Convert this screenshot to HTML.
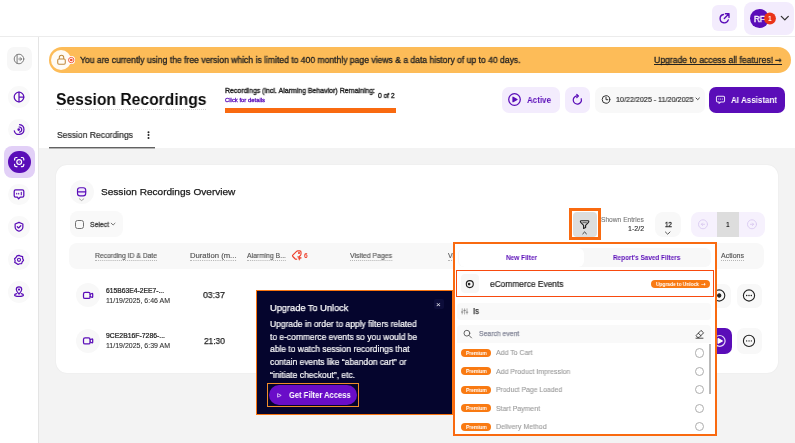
<!DOCTYPE html>
<html lang="en">
<head>
<meta charset="utf-8">
<title>Session Recordings</title>
<style>
*{box-sizing:border-box;margin:0;padding:0}
html,body{width:795px;height:443px;overflow:hidden;background:#fff}
body{font-family:"Liberation Sans",sans-serif;color:#111;position:relative;font-size:10px}
.a{position:absolute}
.t{position:absolute;white-space:nowrap;line-height:1;transform-origin:0 50%;will-change:transform}
svg.l{position:absolute;left:0;top:0;width:795px;height:443px;overflow:visible;pointer-events:none}
.p{fill:none;stroke:#5a0db8;stroke-width:1.25;stroke-linecap:round;stroke-linejoin:round}
.g{fill:none;stroke:#555;stroke-width:1;stroke-linecap:round;stroke-linejoin:round}
.w{fill:none;stroke:#fff;stroke-width:1.2;stroke-linecap:round;stroke-linejoin:round}
.sb{position:absolute;left:8.2px;width:21.6px;height:21.6px;border-radius:50%;background:#f9f9f9}
</style>
</head>
<body>
<!-- frame -->
<div class="a" style="left:0;top:36px;width:795px;height:1px;background:#ececec"></div>
<div class="a" style="left:38px;top:37px;width:1px;height:406px;background:#e4e4e4"></div>
<div class="a" style="left:39px;top:148px;width:756px;height:295px;background:#f3f3f3"></div>
<div class="a" style="left:48.5px;top:147px;width:106.5px;height:2px;background:linear-gradient(#626262 50%,#b4b4b4 50%)"></div>

<!-- top right -->
<div class="a" style="left:712.1px;top:5.3px;width:25.4px;height:25.9px;border-radius:6px;background:#f3ecfd"></div>
<div class="a" style="left:744.3px;top:2.3px;width:49.5px;height:32.7px;border-radius:8px;background:#f3ecfd"></div>
<div class="a" style="left:749.7px;top:8.9px;width:19px;height:19px;border-radius:50%;background:#5a0db8"></div>

<!-- sidebar -->
<div class="a" style="left:7.3px;top:46.7px;width:24.3px;height:24.7px;border-radius:7px;background:#f7f7f7"></div>
<div class="sb" style="top:86.2px"></div>
<div class="sb" style="top:118.7px"></div>
<div class="a" style="left:3.8px;top:146px;width:31.2px;height:32px;border-radius:8px;background:#e2d0f7"></div>
<div class="a" style="left:7.8px;top:150.7px;width:22.8px;height:22.8px;border-radius:50%;background:#5a0db8"></div>
<div class="sb" style="top:183.6px"></div>
<div class="sb" style="top:216px"></div>
<div class="sb" style="top:248.9px"></div>
<div class="sb" style="top:281.2px"></div>

<!-- banner -->
<div class="a" style="left:48.7px;top:47.1px;width:742.3px;height:25.8px;border-radius:13px;background:#fdbc58"></div>
<div class="a" style="left:51.1px;top:49.9px;width:20.3px;height:20.3px;border-radius:50%;background:#fffbf4"></div>
<div class="a" style="left:67.5px;top:56.3px;width:7.5px;height:7.5px;border-radius:50%;background:#fff"></div>

<div class="a" style="left:653.8px;top:63.6px;width:128px;height:1px;background:#222"></div>
<!-- title block -->
<div class="a" style="left:55.6px;top:108.6px;width:150.5px;height:0;border-top:1px dotted #d4d4d4"></div>
<div class="a" style="left:224.5px;top:108.4px;width:171.2px;height:4.5px;background:#f96a10"></div>

<!-- header buttons -->
<div class="a" style="left:501.8px;top:87px;width:58.2px;height:25.8px;border-radius:7px;background:#f3ecfd"></div>
<div class="a" style="left:564.8px;top:87px;width:25.2px;height:25.8px;border-radius:7px;background:#f3ecfd"></div>
<div class="a" style="left:594.6px;top:87px;width:110.4px;height:25.8px;border-radius:7px;background:#f8f8f8"></div>
<div class="a" style="left:709px;top:87px;width:76.2px;height:25.8px;border-radius:7px;background:#5a0db8"></div>

<!-- card -->
<div class="a" style="left:55.6px;top:165.4px;width:722.7px;height:207.7px;border-radius:11px;background:#fff;box-shadow:0 0 1.5px rgba(0,0,0,.08)"></div>
<div class="a" style="left:69.5px;top:180.4px;width:24px;height:24px;border-radius:50%;background:#f8f8f8"></div>
<div class="a" style="left:69.6px;top:211.3px;width:53.8px;height:25.9px;border-radius:8px;background:#f9f9f9"></div>
<div class="a" style="left:75.1px;top:220.4px;width:8.6px;height:8.6px;border-radius:2.6px;border:1.2px solid #727272"></div>
<div class="a" style="left:68.9px;top:243px;width:695.5px;height:26px;border-radius:8px;background:#f8f8f8"></div>
<!-- toolbar right -->
<div class="a" style="left:654.6px;top:212.2px;width:26.3px;height:25.2px;border-radius:8px;background:#f8f8f8"></div>
<div class="a" style="left:690.8px;top:211.6px;width:74px;height:25.8px;border-radius:8px;background:#f6f1fd"></div>
<div class="a" style="left:716.8px;top:211.6px;width:22.1px;height:25.8px;background:#dddddd"></div>
<!-- rows -->
<div class="a" style="left:76.2px;top:283.4px;width:24px;height:24px;border-radius:50%;background:#f8f8f8"></div>
<div class="a" style="left:76.2px;top:328.9px;width:24px;height:24px;border-radius:50%;background:#f8f8f8"></div>
<div class="a" style="left:705px;top:283.5px;width:25.5px;height:24px;border-radius:7px;background:#f8f8f8"></div>
<div class="a" style="left:736.5px;top:283.5px;width:25.5px;height:24px;border-radius:7px;background:#f8f8f8"></div>
<div class="a" style="left:705px;top:328.2px;width:26.7px;height:25.4px;border-radius:7px;background:#5a0db8"></div>
<div class="a" style="left:736.5px;top:328.2px;width:25.5px;height:25.4px;border-radius:7px;background:#f8f8f8"></div>

<svg class="l" viewBox="0 0 795 443">
<!-- share icon -->
<g transform="translate(724.7,18.3)" class="p" style="stroke-width:1.35">
<path d="M-1.2,-3.8 A4.2,4.2 0 1 0 3.6,1.6"/>
<path d="M-0.4,0.2 L4,-4.2 M0.7,-4.5 H4.3 V-0.9"/>
</g>
<!-- avatar badge & chevron -->
<circle cx="769.9" cy="18.6" r="6" fill="#ea3418"/>
<path d="M781.3,16.4 L784.8,19.9 L788.3,16.4" fill="none" stroke="#333" stroke-width="1.3" stroke-linecap="round" stroke-linejoin="round"/>
<!-- sidebar: expand -->
<g transform="translate(19,59)" class="g" style="stroke:#777;stroke-width:.95">
<circle r="4.8"/><path d="M-1.9,-4.3 V4.3"/><path d="M-0.2,0 H2.6 M1.3,-1.4 L2.7,0 L1.3,1.4"/>
</g>
<!-- sidebar 2 -->
<g transform="translate(19,97)" class="p"><circle r="4.8"/><path d="M0,-4.8 V4.8 M0,0 H4.8"/></g>
<!-- sidebar 3 spiral -->
<g transform="translate(19,129.6)" class="p">
<path d="M0.6,-4.9 A4.9,4.9 0 1 1 -4.7,1.2"/>
<path d="M0.2,-2.6 A2.6,2.6 0 0 1 0.6,2.55"/>
<circle r="0.7" cx="-0.3" cy="0" fill="#5a0db8"/>
</g>
<!-- sidebar 4 active -->
<g transform="translate(19.2,162.1)" class="w">
<path d="M-4.6,-2.2 V-3 A1.6,1.6 0 0 1 -3,-4.6 H-2.2 M2.2,-4.6 H3 A1.6,1.6 0 0 1 4.6,-3 V-2.2 M4.6,2.2 V3 A1.6,1.6 0 0 1 3,4.6 H2.2 M-2.2,4.6 H-3 A1.6,1.6 0 0 1 -4.6,3 V2.2"/>
<circle r="2.4"/><circle r="0.5" fill="#fff" stroke="none"/>
</g>
<!-- sidebar 5 chat -->
<g transform="translate(19,194.2)" class="p">
<path d="M-3.4,-4.4 H3.4 A1.4,1.4 0 0 1 4.8,-3 V1.6 A1.4,1.4 0 0 1 3.4,3 H1.2 L-0.4,4.6 L-1.6,3 H-3.4 A1.4,1.4 0 0 1 -4.8,1.6 V-3 A1.4,1.4 0 0 1 -3.4,-4.4 Z"/>
<path d="M-2.3,-0.9 V-0.3 M-0.3,-0.9 V-0.3 M2.3,-2 V0.6" style="stroke-width:1.1"/>
</g>
<!-- sidebar 6 shield -->
<g transform="translate(19,226.8) scale(.9)" class="p" style="stroke-width:1.35">
<path d="M0,-4.9 L4.3,-3.1 V0.2 C4.3,2.6 2.4,4.1 0,5 C-2.4,4.1 -4.3,2.6 -4.3,0.2 V-3.1 Z"/>
<path d="M-1.9,-0.1 L-0.5,1.3 L2,-1.2"/>
</g>
<!-- sidebar 7 gear -->
<g transform="translate(19,259.8) scale(.9)" class="p">
<path d="M0,-5 L1.9,-4 L4,-3.5 L4.1,-1.3 L5,0.6 L3.6,2.3 L2.9,4.3 L0.8,4.4 L-1,5.2 L-2.7,4 L-4.7,3 L-4.3,0.9 L-4.9,-1.1 L-3.3,-2.5 L-2.2,-4.4 Z" style="stroke-width:1.35"/>
<circle r="1.7"/>
</g>
<!-- sidebar 8 pin -->
<g transform="translate(19,291.8) scale(.9)" class="p" style="stroke-width:1.35">
<path d="M0,2.6 C-1.6,0.6 -3,-0.8 -3,-2.5 A3,3 0 0 1 3,-2.5 C3,-0.8 1.6,0.6 0,2.6 Z"/>
<circle cy="-2.5" r="0.6"/>
<path d="M-2.6,2 C-4.3,2.4 -4.9,3 -4.9,3.6 C-4.9,4.6 -2.6,5.2 0,5.2 C2.6,5.2 4.9,4.6 4.9,3.6 C4.9,3 4.3,2.4 2.6,2"/>
</g>
<!-- banner lock -->
<g transform="translate(61.5,60.2) scale(.92)" fill="none" stroke="#c08b3f" stroke-width="1.15" stroke-linejoin="round">
<rect x="-4.1" y="-1.3" width="8.2" height="5.6" rx="1.3"/>
<path d="M-2.4,-1.3 V-2.9 A2.4,2.4 0 0 1 2.4,-2.9 V-1.3"/>
</g>
<circle cx="71.25" cy="60.05" r="2.7" fill="none" stroke="#f0502c" stroke-width="0.9"/>
<circle cx="71.25" cy="60.05" r="1.3" fill="#f0502c"/>
<!-- tab kebab -->
<g fill="#222"><circle cx="148.5" cy="132.3" r="1"/><circle cx="148.5" cy="135.1" r="1"/><circle cx="148.5" cy="137.9" r="1"/></g>
<!-- active play -->
<g transform="translate(514.5,99.5)" class="p"><circle r="5.8"/><path d="M-1.5,-2.3 L2.5,0 L-1.5,2.3 Z" fill="#5a0db8"/></g>
<!-- refresh -->
<g transform="translate(577.3,100)" class="p" style="stroke-width:1.2">
<path d="M3.9,-1.3 A4.1,4.1 0 1 1 0.6,-4.05"/><path d="M-0.5,-5.5 L1,-4 L-0.5,-2.5"/>
</g>
<!-- clock -->
<g transform="translate(606,99.5)" class="g" style="stroke:#333"><circle r="3.8"/><path d="M0,-2.2 V0.2 H1.8"/></g>
<path d="M696,98 L697.7,99.7 L699.4,98" class="g" style="stroke:#333;stroke-width:.9"/>
<!-- AI assistant icon -->
<g transform="translate(720.5,99.6) scale(.9)" class="w" style="stroke-width:1.15;stroke:#eadffa">
<path d="M-3.2,-3.8 H3.2 A1.3,1.3 0 0 1 4.5,-2.5 V1.3 A1.3,1.3 0 0 1 3.2,2.6 H0.4 L-1.6,4.2 V2.6 H-3.2 A1.3,1.3 0 0 1 -4.5,1.3 V-2.5 A1.3,1.3 0 0 1 -3.2,-3.8 Z"/>
<path d="M-2,-0.6 H-1.9 M0,-0.6 H0.1 M2,-0.6 H2.1" style="stroke-width:1.2"/>
</g>
<!-- card header icon -->
<g transform="translate(81.6,191.8)" class="p" style="stroke-width:1.15">
<rect x="-4.1" y="-4.1" width="8.2" height="8.2" rx="2.4" fill="#f1e9fc"/><path d="M-4.1,0 H4.1"/>
</g>
<path d="M79.4,198.8 L81.6,200.6 L83.8,198.8" class="g" style="stroke:#999;stroke-width:.9"/>
<path d="M111.2,223.2 L113.1,225 L115,223.2" class="g" style="stroke:#555;stroke-width:.8"/>
<!-- alarm tag icon -->
<g transform="translate(296.9,255)" fill="none" stroke="#ee3f2b" stroke-width="1.15" stroke-linejoin="round" stroke-linecap="round">
<path d="M-4.1,0.2 L-0.3,-3.6 Q0.2,-4.1 0.9,-4.1 H3.1 Q4.1,-4.1 4.1,-3.1 V-0.9 Q4.1,-0.2 3.6,0.3 L2.4,1.5 M-0.2,4.1 Q-0.9,4.6 -1.6,4 L-4.1,1.5 Q-4.7,0.8 -4.1,0.2"/>
<circle cx="2.1" cy="-2.1" r="0.45" fill="#ee3f2b"/>
<path d="M1.1,1.6 L4.6,2.9 L3.1,3.4 L2.6,4.9 Z" fill="#ee3f2b" stroke-width=".6"/>
</g>
<!-- row camera icons -->
<g transform="translate(88.2,295.4)" class="p"><rect x="-4.7" y="-3.1" width="6.6" height="6.2" rx="1.6"/><path d="M1.9,-1.1 L3.7,-1.9 Q4.5,-2.1 4.5,-1.3 V1.3 Q4.5,2.1 3.7,1.9 L1.9,1.1"/></g>
<g transform="translate(88.2,340.9)" class="p"><rect x="-4.7" y="-3.1" width="6.6" height="6.2" rx="1.6"/><path d="M1.9,-1.1 L3.7,-1.9 Q4.5,-2.1 4.5,-1.3 V1.3 Q4.5,2.1 3.7,1.9 L1.9,1.1"/></g>
<!-- row action icons -->
<g transform="translate(719.2,295.5)" class="g" style="stroke:#222;stroke-width:1.1"><circle r="5.6"/><circle r="1.6" fill="#222"/></g>
<g transform="translate(749,295.5)" class="g" style="stroke:#222;stroke-width:1.1"><circle r="5.6"/><path d="M-2.4,0 H-2.2 M-0.1,0 H0.1 M2.2,0 H2.4" style="stroke-width:1.3"/></g>
<g transform="translate(719.7,340.9)" class="w" style="stroke:#e9dcfb"><circle r="5.4"/><path d="M-1.6,-2.4 L2.6,0 L-1.6,2.4 Z" fill="#fff" stroke="#fff"/></g>
<g transform="translate(749,340.9)" class="g" style="stroke:#222;stroke-width:1.1"><circle r="5.6"/><path d="M-2.4,0 H-2.3 M0,0 H0.1 M2.3,0 H2.4" style="stroke-width:1.2"/></g>
<!-- page size chevron & pagination -->
<path d="M665.4,232 L667.7,234.2 L670,232" class="g" style="stroke:#444;stroke-width:.9"/>
<g transform="translate(703,224.3)" fill="none" stroke="#d9caf1" stroke-width="0.9" stroke-linecap="round" stroke-linejoin="round"><circle r="4.5"/><path d="M1.6,0 H-1.6 M-0.4,-1.3 L-1.7,0 L-0.4,1.3"/></g>
<g transform="translate(752,224.3)" fill="none" stroke="#d9caf1" stroke-width="0.9" stroke-linecap="round" stroke-linejoin="round"><circle r="4.5"/><path d="M-1.6,0 H1.6 M0.4,-1.3 L1.7,0 L0.4,1.3"/></g>

</svg>

<div class="t" style="left:754.4px;top:15px;font-size:8.4px;color:#fff;transform:scaleX(0.958);-webkit-text-stroke:0.4px currentColor;">RF</div>
<div class="t" style="left:768.2px;top:15px;font-size:7.6px;color:#fff;font-weight:bold;transform:scaleX(0.850);">1</div>
<div class="t" style="left:79.8px;top:56px;font-size:8.9px;color:#222;transform:scaleX(0.966);-webkit-text-stroke:0.3px currentColor;">You are currently using the free version which is limited to 400 monthly page views &amp; a data history of up to 40 days.</div>
<div class="t" style="left:653.8px;top:56px;font-size:8.9px;color:#222;transform:scaleX(0.973);-webkit-text-stroke:0.3px currentColor;">Upgrade to access all features!</div>
<div class="t" style="left:775.2px;top:56px;font-size:8.9px;color:#222;transform:scaleX(0.887);font-family:'DejaVu Sans',sans-serif;-webkit-text-stroke:0.3px currentColor;">→</div>
<div class="t" style="left:55.6px;top:91px;font-size:17.4px;color:#0c0c0c;font-weight:bold;transform:scaleX(0.900);">Session Recordings</div>
<div class="t" style="left:224.6px;top:88px;font-size:7.1px;color:#222;transform:scaleX(0.983);-webkit-text-stroke:0.35px currentColor;">Recordings (incl. Alarming Behavior) Remaining:</div>
<div class="t" style="left:378.0px;top:93px;font-size:7.1px;color:#222;transform:scaleX(0.941);-webkit-text-stroke:0.35px currentColor;">0 of 2</div>
<div class="t" style="left:224.6px;top:98px;font-size:5.7px;color:#5a0db8;transform:scaleX(1.037);-webkit-text-stroke:0.3px currentColor;">Click for details</div>
<div class="t" style="left:527.3px;top:96px;font-size:8.8px;color:#5a0db8;font-weight:bold;transform:scaleX(0.909);">Active</div>
<div class="t" style="left:616.3px;top:96px;font-size:7.4px;color:#2e2e2e;transform:scaleX(0.968);-webkit-text-stroke:0.18px currentColor;">10/22/2025 - 11/20/2025</div>
<div class="t" style="left:730.8px;top:96px;font-size:8.8px;color:#fff;font-weight:bold;transform:scaleX(0.911);">AI Assistant</div>
<div class="t" style="left:57.1px;top:131px;font-size:8.8px;color:#2a2a2a;transform:scaleX(0.971);-webkit-text-stroke:0.2px currentColor;">Session Recordings</div>
<div class="t" style="left:101.2px;top:187px;font-size:9.7px;color:#1a1a1a;transform:scaleX(1.040);-webkit-text-stroke:0.25px currentColor;">Session Recordings Overview</div>
<div class="t" style="left:89.7px;top:221px;font-size:7px;color:#444;transform:scaleX(0.976);-webkit-text-stroke:0.3px currentColor;">Select</div>
<div class="t" style="left:94.7px;top:252px;font-size:7px;color:#555;transform:scaleX(0.966);border-bottom:1px dotted #b5b5b5;padding-bottom:1px;-webkit-text-stroke:0.15px currentColor;">Recording ID &amp; Date</div>
<div class="t" style="left:189.6px;top:252px;font-size:7px;color:#555;transform:scaleX(1.097);border-bottom:1px dotted #b5b5b5;padding-bottom:1px;-webkit-text-stroke:0.15px currentColor;">Duration (m...</div>
<div class="t" style="left:246.9px;top:252px;font-size:7px;color:#555;transform:scaleX(0.968);border-bottom:1px dotted #b5b5b5;padding-bottom:1px;-webkit-text-stroke:0.15px currentColor;">Alarming B...</div>
<div class="t" style="left:304.2px;top:253px;font-size:6.6px;color:#ee3f2b;font-weight:bold;transform:scaleX(1.008);">6</div>
<div class="t" style="left:349.9px;top:252px;font-size:7px;color:#555;transform:scaleX(0.984);border-bottom:1px dotted #b5b5b5;padding-bottom:1px;-webkit-text-stroke:0.15px currentColor;">Visited Pages</div>
<div class="t" style="left:447.5px;top:252px;font-size:7px;color:#555;transform:scaleX(0.982);border-bottom:1px dotted #b5b5b5;padding-bottom:1px;-webkit-text-stroke:0.15px currentColor;">Vi</div>
<div class="t" style="left:721.3px;top:252px;font-size:7px;color:#555;transform:scaleX(1.001);border-bottom:1px dotted #b5b5b5;padding-bottom:1px;-webkit-text-stroke:0.15px currentColor;">Actions</div>
<div class="t" style="left:105.5px;top:288px;font-size:6.6px;color:#222;transform:scaleX(1.021);-webkit-text-stroke:0.22px currentColor;">615B63E4-2EE7-...</div>
<div class="t" style="left:105.5px;top:298px;font-size:6.8px;color:#333;transform:scaleX(1.028);-webkit-text-stroke:0.1px currentColor;">11/19/2025, 6:46 AM</div>
<div class="t" style="left:203.4px;top:291px;font-size:9.2px;color:#222;transform:scaleX(0.948);-webkit-text-stroke:0.25px currentColor;">03:37</div>
<div class="t" style="left:105.5px;top:333px;font-size:6.6px;color:#222;transform:scaleX(1.039);-webkit-text-stroke:0.22px currentColor;">9CE2B16F-7286-...</div>
<div class="t" style="left:105.5px;top:343px;font-size:6.8px;color:#333;transform:scaleX(1.028);-webkit-text-stroke:0.1px currentColor;">11/19/2025, 6:39 AM</div>
<div class="t" style="left:203.9px;top:337px;font-size:9.2px;color:#222;transform:scaleX(0.904);-webkit-text-stroke:0.25px currentColor;">21:30</div>
<div class="t" style="left:601.0px;top:217px;font-size:6.6px;color:#777;transform:scaleX(1.007);-webkit-text-stroke:0.1px currentColor;">Shown Entries</div>
<div class="t" style="left:628.3px;top:226px;font-size:6.8px;color:#2a2a2a;transform:scaleX(1.039);-webkit-text-stroke:0.1px currentColor;">1-2/2</div>
<div class="t" style="left:664.6px;top:221px;font-size:7.2px;color:#222;transform:scaleX(0.850);-webkit-text-stroke:0.3px currentColor;">12</div>
<div class="t" style="left:726.0px;top:221px;font-size:7.5px;color:#222;font-weight:bold;transform:scaleX(0.839);">1</div>

<!-- filter button highlight -->
<div class="a" style="left:573px;top:212.1px;width:23.5px;height:24.6px;border-radius:4px;background:#dddddd"></div>
<div class="a" style="left:569px;top:208.1px;width:31.9px;height:32px;border:3px solid #f96a10"></div>

<!-- tooltip -->
<div class="a" style="left:255.8px;top:290.3px;width:197px;height:125.2px;background:#05052d;border:1.6px solid #f9740f"></div>
<div class="a" style="left:433.6px;top:298.8px;width:10.4px;height:10.4px;border-radius:2px;background:#0d0d3a"></div>
<div class="a" style="left:267.2px;top:382.5px;width:91.6px;height:24.8px;border:1px solid #f08c2a"></div>
<div class="a" style="left:269.3px;top:385.1px;width:87.4px;height:19.6px;border-radius:10px;background:#6a0dc8"></div>

<!-- filter panel -->
<div class="a" style="left:452.6px;top:241.9px;width:264.7px;height:193.8px;background:#fff;border:2.6px solid #f96a10"></div>
<div class="a" style="left:458.3px;top:247.7px;width:253px;height:19.3px;border-radius:6px;background:#f8f8f8"></div>
<div class="a" style="left:458.5px;top:247.7px;width:125.3px;height:19.3px;border-radius:6px;background:#fff"></div>
<div class="a" style="left:456.2px;top:270.2px;width:257.6px;height:26.5px;border:1.2px solid #f84a0e"></div>
<div class="a" style="left:461.4px;top:274.4px;width:17.6px;height:18.4px;border-radius:4px;background:#f7f7f7"></div>
<div class="a" style="left:651.3px;top:280.3px;width:59px;height:8.2px;border-radius:4.1px;background:#f97a12"></div>
<div class="a" style="left:457px;top:302.7px;width:254px;height:17.1px;border-radius:4px;background:#f9f9f9"></div>
<div class="a" style="left:457px;top:324.8px;width:253.5px;height:18.6px;border-radius:4px 4px 0 0;background:#f9f9f9"></div>
<div class="a" style="left:709.3px;top:344px;width:1.4px;height:50px;background:#b9b9b9"></div>
<div class="a" style="left:461.4px;top:348.9px;width:29.5px;height:8px;border-radius:4px;background:#f97a12"></div>
<div class="a" style="left:695px;top:348.2px;width:9.4px;height:9.4px;border-radius:50%;border:1px solid #adadad;background:#fff"></div>
<div class="a" style="left:461.4px;top:367.4px;width:29.5px;height:8px;border-radius:4px;background:#f97a12"></div>
<div class="a" style="left:695px;top:366.7px;width:9.4px;height:9.4px;border-radius:50%;border:1px solid #adadad;background:#fff"></div>
<div class="a" style="left:461.4px;top:385.7px;width:29.5px;height:8px;border-radius:4px;background:#f97a12"></div>
<div class="a" style="left:695px;top:385.0px;width:9.4px;height:9.4px;border-radius:50%;border:1px solid #adadad;background:#fff"></div>
<div class="a" style="left:461.4px;top:404.2px;width:29.5px;height:8px;border-radius:4px;background:#f97a12"></div>
<div class="a" style="left:695px;top:403.5px;width:9.4px;height:9.4px;border-radius:50%;border:1px solid #adadad;background:#fff"></div>
<div class="a" style="left:461.4px;top:422.7px;width:29.5px;height:8px;border-radius:4px;background:#f97a12"></div>
<div class="a" style="left:695px;top:422.0px;width:9.4px;height:9.4px;border-radius:50%;border:1px solid #adadad;background:#fff"></div>


<svg class="l" viewBox="0 0 795 443">
<!-- funnel -->
<g transform="translate(584.6,224.6)" class="g" style="stroke:#222;stroke-width:1.15">
<path d="M-4.2,-3.1 Q-4.2,-3.9 -3.4,-3.9 H3.4 Q4.2,-3.9 4.2,-3.1 Q4.2,-2.5 3.6,-1.9 L1,0.7 V3 L-1,3.9 V0.7 L-3.6,-1.9 Q-4.2,-2.5 -4.2,-3.1 Z"/><path d="M-1.8,-1.9 H1.8" style="stroke-width:.7"/>
</g>
<path d="M582.8,233.8 L584.6,232 L586.4,233.8" class="g" style="stroke:#222;stroke-width:.9"/>
<!-- tooltip button play -->
<path d="M277.6,393.6 L281.2,395.4 L277.6,397.2 Z" fill="none" stroke="#e8d9fb" stroke-width="0.8" stroke-linejoin="round"/>
<!-- ecommerce icon -->
<g transform="translate(469.8,284.1)" class="g" style="stroke:#222;stroke-width:1.1"><circle r="3.5"/><circle r="0.8" cx="-0.7" fill="#222"/></g>
<!-- Is sliders -->
<g class="g" style="stroke:#9a9a9a;stroke-width:.8"><path d="M462.2,308.8 V314 M464.6,308.8 V314 M467,308.8 V314"/><path d="M461.4,312 H463 M463.8,310.4 H465.4 M466.2,312.2 H467.8" style="stroke:#777"/></g>
<!-- search -->
<g class="g" style="stroke:#555;stroke-width:.9"><circle cx="466.9" cy="333.2" r="2.9"/><path d="M469.1,335.5 L471.5,337.9"/></g>
<!-- eraser -->
<g transform="translate(699.6,334)" class="g" style="stroke:#333;stroke-width:.9">
<path d="M-3.2,1.2 L1.4,-3.6 L4,-1.2 L-0.4,3.4 H-1.8 Z M-1.3,-0.8 L1.3,1.7"/><path d="M-3.6,4.2 H3.4"/>
</g>

</svg>

<div class="t" style="left:269.8px;top:303px;font-size:9.6px;color:#fff;transform:scaleX(0.964);-webkit-text-stroke:0.25px currentColor;">Upgrade To Unlock</div>
<div class="t" style="left:269.8px;top:320px;font-size:8.8px;color:#fff;transform:scaleX(0.964);-webkit-text-stroke:0.2px currentColor;">Upgrade in order to apply filters related</div>
<div class="t" style="left:269.8px;top:333px;font-size:8.8px;color:#fff;transform:scaleX(0.961);-webkit-text-stroke:0.2px currentColor;">to e-commerce events so you would be</div>
<div class="t" style="left:269.8px;top:345px;font-size:8.8px;color:#fff;transform:scaleX(0.964);-webkit-text-stroke:0.2px currentColor;">able to watch session recordings that</div>
<div class="t" style="left:269.8px;top:358px;font-size:8.8px;color:#fff;transform:scaleX(0.960);-webkit-text-stroke:0.2px currentColor;">contain events like “abandon cart” or</div>
<div class="t" style="left:269.8px;top:371px;font-size:8.8px;color:#fff;transform:scaleX(0.967);-webkit-text-stroke:0.2px currentColor;">“initiate checkout”, etc.</div>
<div class="t" style="left:288.8px;top:391px;font-size:8.8px;color:#fff;font-weight:bold;transform:scaleX(0.861);">Get Filter Access</div>
<div class="t" style="left:435.9px;top:301px;font-size:8px;color:#e8e8f0;transform:scaleX(1.027);">×</div>
<div class="t" style="left:505.6px;top:255px;font-size:7.1px;color:#5a0db8;font-weight:bold;transform:scaleX(0.914);">New Filter</div>
<div class="t" style="left:612.6px;top:255px;font-size:7.1px;color:#5a0db8;font-weight:bold;transform:scaleX(0.901);">Report's Saved Filters</div>
<div class="t" style="left:489.6px;top:280px;font-size:8.9px;color:#222;transform:scaleX(0.942);-webkit-text-stroke:0.2px currentColor;">eCommerce Events</div>
<div class="t" style="left:655.9px;top:282px;font-size:5.5px;color:#fff;font-weight:bold;transform:scaleX(0.879);">Upgrade to Unlock</div>
<div class="t" style="left:700.8px;top:282px;font-size:5.5px;color:#fff;font-weight:bold;transform:scaleX(0.998);font-family:'DejaVu Sans',sans-serif;">→</div>
<div class="t" style="left:472.6px;top:307px;font-size:8.3px;color:#333;transform:scaleX(0.928);-webkit-text-stroke:0.25px currentColor;">Is</div>
<div class="t" style="left:478.7px;top:330px;font-size:7px;color:#858899;transform:scaleX(0.977);-webkit-text-stroke:0.25px currentColor;">Search event</div>
<div class="t" style="left:465.8px;top:351px;font-size:5.4px;color:#fff;font-weight:bold;transform:scaleX(0.897);">Premium</div>
<div class="t" style="left:495.8px;top:349px;font-size:7.3px;color:#999999;transform:scaleX(0.953);-webkit-text-stroke:0.1px currentColor;">Add To Cart</div>
<div class="t" style="left:465.8px;top:369px;font-size:5.4px;color:#fff;font-weight:bold;transform:scaleX(0.897);">Premium</div>
<div class="t" style="left:495.8px;top:368px;font-size:7.3px;color:#999999;transform:scaleX(0.954);-webkit-text-stroke:0.1px currentColor;">Add Product Impression</div>
<div class="t" style="left:465.8px;top:388px;font-size:5.4px;color:#fff;font-weight:bold;transform:scaleX(0.897);">Premium</div>
<div class="t" style="left:495.8px;top:386px;font-size:7.3px;color:#999999;transform:scaleX(0.938);-webkit-text-stroke:0.1px currentColor;">Product Page Loaded</div>
<div class="t" style="left:465.8px;top:406px;font-size:5.4px;color:#fff;font-weight:bold;transform:scaleX(0.897);">Premium</div>
<div class="t" style="left:495.8px;top:405px;font-size:7.3px;color:#999999;transform:scaleX(0.952);-webkit-text-stroke:0.1px currentColor;">Start Payment</div>
<div class="t" style="left:465.8px;top:425px;font-size:5.4px;color:#fff;font-weight:bold;transform:scaleX(0.897);">Premium</div>
<div class="t" style="left:495.8px;top:423px;font-size:7.3px;color:#999999;transform:scaleX(0.961);-webkit-text-stroke:0.1px currentColor;">Delivery Method</div>
</body>
</html>
